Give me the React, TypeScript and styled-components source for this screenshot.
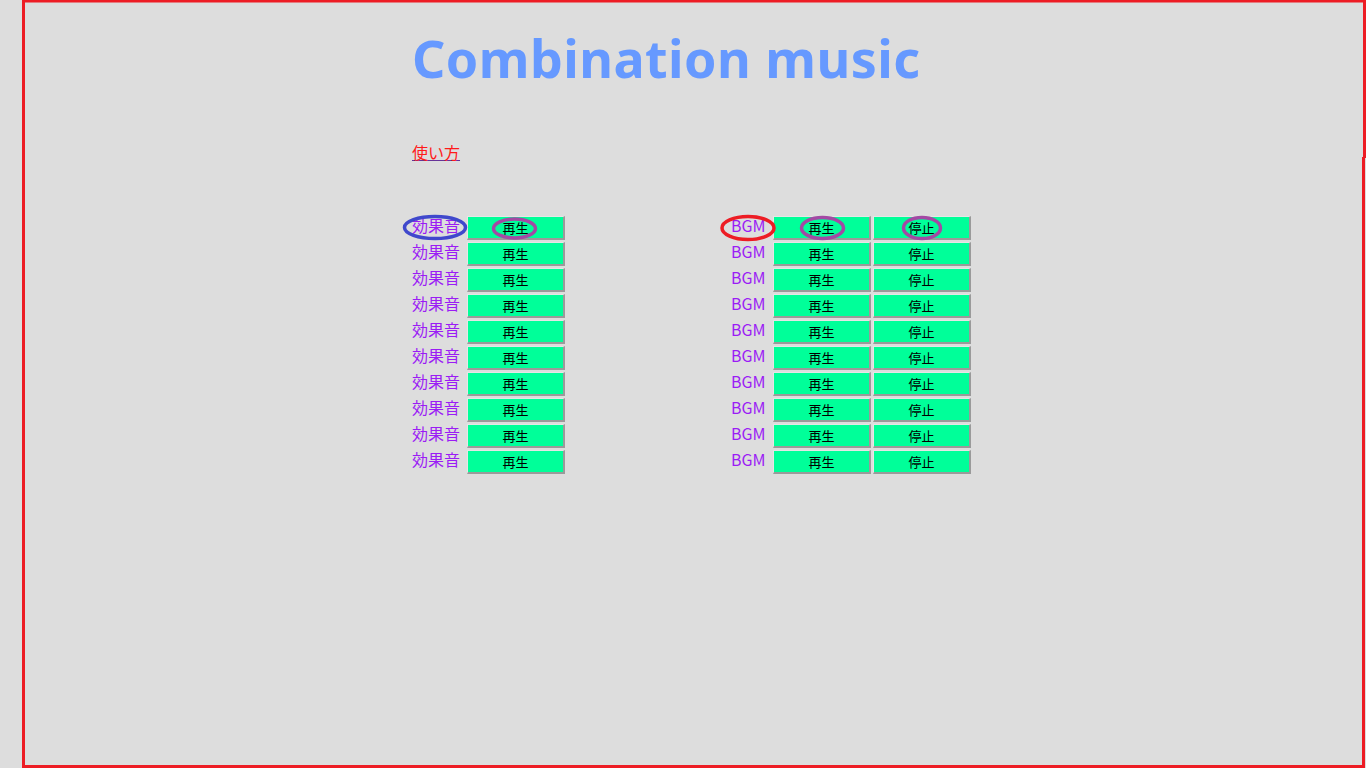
import React from "react";
import styled, { createGlobalStyle } from "styled-components";

const GlobalStyle = createGlobalStyle`
  html, body {
    margin: 0;
    padding: 0;
    background: #dddddd;
  }
  body {
    font-family: "Noto Sans CJK JP", "Noto Sans", sans-serif;
  }
`;

const Page = styled.main`
  position: relative;
  width: 1366px;
  height: 768px;
  box-sizing: border-box;
  padding: 28px 0 0 412px;
  display: flex;
  flex-direction: column;
  align-items: flex-start;
  overflow: hidden;
`;

const Title = styled.h1`
  margin: 0;
  font-family: "Noto Sans", "Noto Sans CJK JP", sans-serif;
  font-weight: 700;
  font-size: 52px;
  line-height: 60px;
  letter-spacing: 0.45px;
  color: #6699ff;
`;

const HelpLink = styled.a`
  margin-top: 54px;
  font-size: 16px;
  line-height: 20px;
  color: #ff1a1a;
  text-decoration: underline;
  text-decoration-color: #663399;
`;

const Tables = styled.div`
  margin-top: 54px;
  display: flex;
  gap: 166px;
  align-items: flex-start;
`;

const SoundTable = styled.div<{ $label: number; $buttons: number }>`
  display: grid;
  grid-template-columns: ${(p) => p.$label}px repeat(${(p) => p.$buttons}, 98px);
  column-gap: 2px;
  row-gap: 2px;
`;

const Label = styled.span`
  font-size: 16px;
  line-height: 20px;
  height: 24px;
  margin-top: -1px;
  color: #9b1cf5;
  white-space: nowrap;
`;

const PlayButton = styled.button`
  width: 98px;
  height: 24px;
  padding: 0;
  box-sizing: border-box;
  background: #00ff99;
  border-style: solid;
  border-width: 1px 2px 2px 1px;
  border-color: #e6e6e6 #9a9a9a #9a9a9a #e6e6e6;
  font-family: "Noto Sans CJK JP", sans-serif;
  font-size: 13px;
  line-height: 20px;
  color: #000;
  cursor: pointer;
`;

const Annotations = styled.svg`
  position: absolute;
  left: 0;
  top: 0;
  width: 1366px;
  height: 768px;
  pointer-events: none;
`;

const rows = Array.from({ length: 10 }, (_, i) => i);

export default function App() {
  return (
    <>
      <GlobalStyle />
      <Page>
        <Title>Combination music</Title>
        <HelpLink href="#">使い方</HelpLink>
        <Tables>
          <SoundTable $label={53} $buttons={1}>
            {rows.map((i) => (
              <React.Fragment key={i}>
                <Label>効果音</Label>
                <PlayButton>再生</PlayButton>
              </React.Fragment>
            ))}
          </SoundTable>
          <SoundTable $label={40} $buttons={2}>
            {rows.map((i) => (
              <React.Fragment key={i}>
                <Label>BGM</Label>
                <PlayButton>再生</PlayButton>
                <PlayButton>停止</PlayButton>
              </React.Fragment>
            ))}
          </SoundTable>
        </Tables>
        <Annotations viewBox="0 0 1366 768">
          <path
            d="M23.5 768 V1 H1364.5 V158 M1363.5 157 V766.5 H23.5"
            fill="none"
            stroke="#ed1c24"
            strokeWidth="3"
          />
          <ellipse cx="435" cy="227.5" rx="30.5" ry="11" fill="none" stroke="#3f48cc" strokeWidth="3.5" />
          <ellipse cx="514.5" cy="228.5" rx="21" ry="9.5" fill="none" stroke="#a349a4" strokeWidth="3.5" />
          <ellipse cx="748" cy="228" rx="26" ry="11.5" fill="none" stroke="#ed1c24" strokeWidth="3.5" />
          <ellipse cx="822.5" cy="228" rx="21" ry="10.5" fill="none" stroke="#a349a4" strokeWidth="3.5" />
          <ellipse cx="922" cy="228" rx="18.5" ry="10.5" fill="none" stroke="#a349a4" strokeWidth="3.5" />
        </Annotations>
      </Page>
    </>
  );
}
